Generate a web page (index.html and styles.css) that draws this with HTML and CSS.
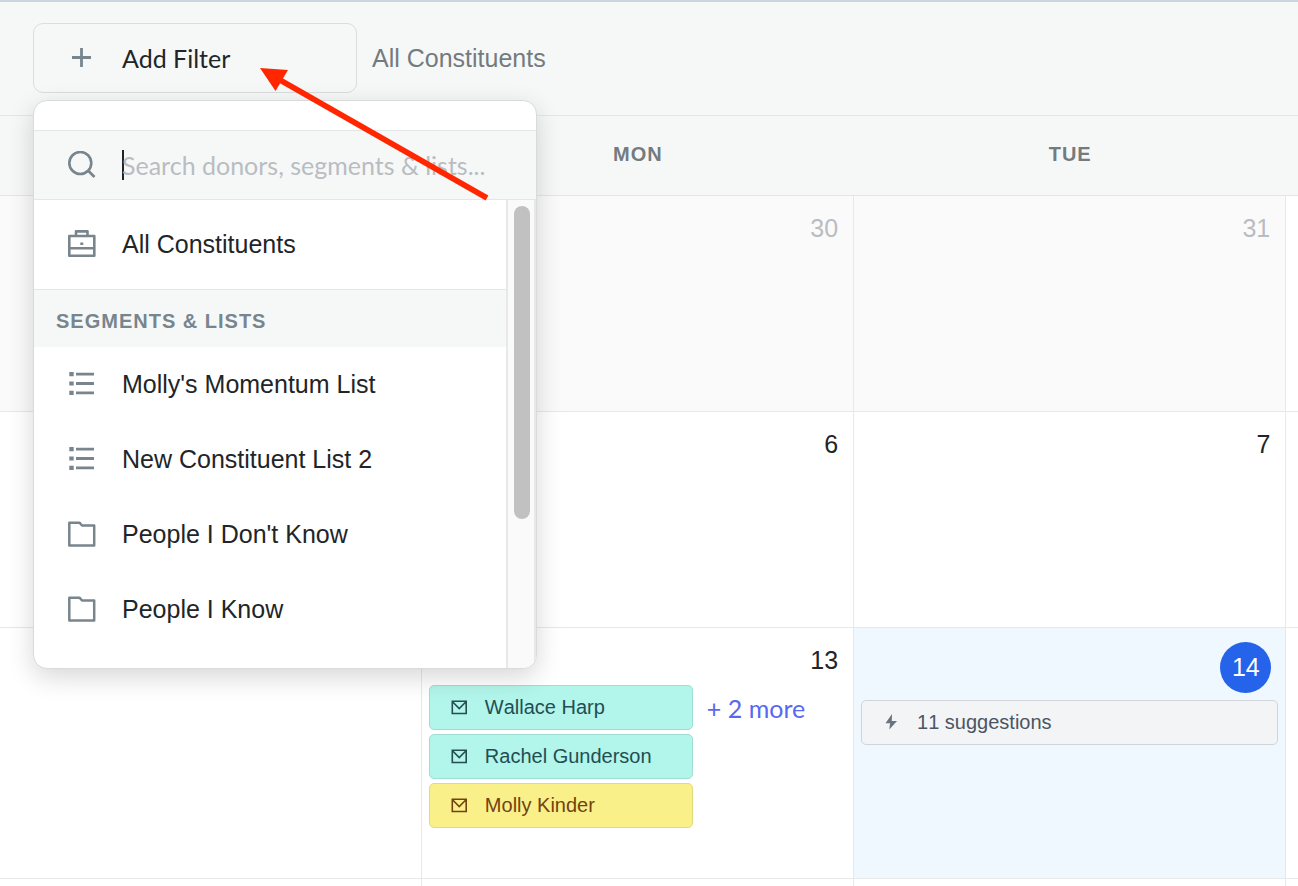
FILE: index.html
```html
<!DOCTYPE html>
<html lang="en">

<head>
    <meta charset="utf-8">
    <title>Calendar</title>
    <meta name="viewport" content="width=device-width, initial-scale=1.0">
    <link rel="stylesheet" href="styles.css">
</head>

<body>
    <!-- Shared icons -->
    <svg class="sprite" aria-hidden="true">
        <symbol id="icon-list" viewBox="0 0 28 28">
            <path d="M1.300 2h4.400v4.200H1.300zM1.300 11.400h4.400v4.200H1.300zM1.300 20.800h4.400v4.200H1.300zM8 2.700h18v2.800H8zM8 12.100h18v2.800H8zM8 21.500h18v2.800H8z" fill="currentColor"/>
        </symbol>
        <symbol id="icon-folder" viewBox="0 0 28 28">
            <path d="M1.300 2.700h10.200l2.500 2.800h12.200v20H1.300z" fill="none" stroke="currentColor" stroke-width="2.500" stroke-linejoin="round"/>
        </symbol>
        <symbol id="icon-mail" viewBox="0 0 16 16">
            <path d="M1.300 1.300h13.900v12.200H1.300zM2 2.200l6.250 6.300L14.500 2.200" fill="none" stroke="currentColor" stroke-width="1.600"/>
        </symbol>
    </svg>

    <header class="toolbar">
        <div class="filter">
            <button type="button" class="filter-button" aria-expanded="true">
                <svg class="icon" viewBox="0 0 28 28"><path d="M13.500 4v19M4 13.500h19" stroke="currentColor" stroke-width="2.800"/></svg>
                <span>Add Filter</span>
            </button>

            <div class="menu">
                <label class="search">
                    <svg class="icon" viewBox="0 1 28 28"><g fill="none" stroke="currentColor" stroke-width="2.600"><circle cx="12.300" cy="13" r="11"/><path d="M20 20.500l6.500 6.500"/></g></svg>
                    <input type="text" class="search-input" aria-label="Search" placeholder="Search donors, segments &amp; lists...">
                </label>
                <div class="menu-body">
                    <div class="menu-list">
                        <a href="#" class="menu-item menu-item-all">
                            <svg class="icon" viewBox="0 0 28 28"><g fill="none" stroke="currentColor" stroke-width="2.600" stroke-linejoin="round"><path d="M1.300 6h25v19.700h-25zM1.300 18.300h25M8 6V1.400h11.500V6"/></g><path d="M12.300 12.500h3v2.500h-3z" fill="currentColor"/></svg>
                            <span>All Constituents</span>
                        </a>
                        <h2 class="menu-title">SEGMENTS &amp; LISTS</h2>
                        <a href="#" class="menu-item"><svg class="icon"><use href="#icon-list"/></svg><span>Molly's Momentum List</span></a>
                        <a href="#" class="menu-item"><svg class="icon"><use href="#icon-list"/></svg><span>New Constituent List 2</span></a>
                        <a href="#" class="menu-item"><svg class="icon"><use href="#icon-folder"/></svg><span>People I Don't Know</span></a>
                        <a href="#" class="menu-item"><svg class="icon"><use href="#icon-folder"/></svg><span>People I Know</span></a>
                    </div>
                    <div class="scrollbar"><div class="scrollbar-thumb"></div></div>
                </div>
            </div>

            <!-- Arrow pointing at the filter button -->
            <svg class="arrow" viewBox="0 0 230 134" width="230" height="134" aria-hidden="true">
                <path d="M20 12L227 130" stroke="#ff2600" stroke-width="5.500"/>
                <path d="M0 0L28 2L15.500 23z" fill="#ff2600"/>
            </svg>
        </div>
        <span class="current-filter">All Constituents</span>
    </header>

    <table class="calendar">
        <colgroup>
            <col class="col-first">
            <col class="col-day">
            <col class="col-day">
            <col>
        </colgroup>
        <thead>
            <tr>
                <th></th>
                <th>MON</th>
                <th>TUE</th>
                <th></th>
            </tr>
        </thead>
        <tbody>
            <tr class="week">
                <td class="other-month"></td>
                <td class="other-month"><div class="date">30</div></td>
                <td class="other-month"><div class="date">31</div></td>
                <td></td>
            </tr>
            <tr class="week">
                <td></td>
                <td><div class="date">6</div></td>
                <td><div class="date">7</div></td>
                <td></td>
            </tr>
            <tr class="week week-tall">
                <td></td>
                <td>
                    <div class="date">13</div>
                    <div class="events">
                        <div class="event-list">
                            <button type="button" class="event event-teal"><svg class="event-icon"><use href="#icon-mail"/></svg>Wallace Harp</button>
                            <button type="button" class="event event-teal"><svg class="event-icon"><use href="#icon-mail"/></svg>Rachel Gunderson</button>
                            <button type="button" class="event event-yellow"><svg class="event-icon"><use href="#icon-mail"/></svg>Molly Kinder</button>
                        </div>
                        <a href="#" class="more">+ 2 more</a>
                    </div>
                </td>
                <td class="today">
                    <div class="date"><span class="today-number">14</span></div>
                    <div class="events">
                        <button type="button" class="event event-gray"><svg class="event-icon" viewBox="0 0 16 16"><path d="M9 -1L2.500 8.200h4.600L6.300 14.500 14 6H8.800z" fill="#6b7280"/></svg>11 suggestions</button>
                    </div>
                </td>
                <td></td>
            </tr>
            <tr class="week week-last">
                <td></td>
                <td></td>
                <td></td>
                <td></td>
            </tr>
        </tbody>
    </table>
</body>

</html>
```
FILE: styles.css
```css
* {
    box-sizing: border-box;
}

body {
    margin: 0;
    background-color: #ffffff;
    color: #212529;
    font-family: "Liberation Sans", Arial, sans-serif;
    font-size: 25px;
    line-height: 30px;
}

a {
    color: inherit;
    text-decoration: none;
}

button {
    font-family: inherit;
    cursor: pointer;
}

.sprite {
    display: none;
}

.icon {
    width: 28px;
    height: 28px;
    flex-shrink: 0;
    color: #78858d;
}

/* Toolbar */
.toolbar {
    display: flex;
    align-items: center;
    gap: 15px;
    height: 116px;
    padding: 0 33px 2px;
    background-color: #f6f8f8;
    border-top: 2px solid #cbd5e0;
    border-bottom: 1px solid #e4e7e7;
}

.filter {
    position: relative;
}

.filter-button {
    display: flex;
    align-items: center;
    gap: 26px;
    width: 324px;
    height: 70px;
    padding: 0 34px;
    background-color: transparent;
    border: 1px solid #d9dddd;
    border-radius: 10px;
    color: #212529;
    font-family: Lato, sans-serif;
    font-size: 25px;
}

.current-filter {
    color: #747b7e;
}

/* Dropdown */
.menu {
    position: absolute;
    top: 77px;
    left: 0;
    z-index: 2;
    width: 504px;
    padding-top: 29px;
    overflow: hidden;
    background-color: #ffffff;
    border: 1px solid #d9dbdb;
    border-radius: 14px;
    box-shadow: 0 8px 26px rgba(0, 0, 0, 0.16);
}

.search {
    display: flex;
    align-items: center;
    gap: 26px;
    height: 70px;
    padding: 0 34px;
    background-color: #f6f8f8;
    border-top: 1px solid #e4e7e7;
    border-bottom: 1px solid #e4e7e7;
}

.search-input {
    flex: 1;
    min-width: 0;
    height: 30px;
    padding: 0;
    border: none;
    outline: none;
    /* text cursor */
    background: linear-gradient(#212529, #212529) left / 2px 30px no-repeat;
    font-family: Lato, sans-serif;
    font-size: 25px;
}

.search-input::placeholder {
    color: #b9bdc1;
}

.menu-body {
    display: flex;
}

.menu-list {
    flex: 1;
    padding-bottom: 21px;
}

.menu-item {
    display: flex;
    align-items: center;
    gap: 26px;
    height: 75px;
    padding: 0 34px;
}

.menu-item-all {
    height: 90px;
    border-bottom: 1px solid #e4e7e7;
}

.menu-title {
    margin: 0;
    padding: 16px 22px 11px;
    background-color: #f6f8f8;
    color: #78858d;
    font-size: 20px;
    letter-spacing: 1px;
}

.scrollbar {
    width: 30px;
    padding: 6px;
    background-color: #fafafa;
    border-left: 2px solid #e8e8e8;
    border-right: 2px solid #e8e8e8;
}

.scrollbar-thumb {
    width: 16px;
    height: 313px;
    background-color: #c1c1c1;
    border-radius: 8px;
}

.arrow {
    position: absolute;
    top: 45px;
    left: 227px;
    z-index: 3;
    pointer-events: none;
}

/* Calendar */
.calendar {
    width: 100%;
    table-layout: fixed;
    border-collapse: separate;
    border-spacing: 0;
}

.col-first {
    width: 32.5%;
}

.col-day {
    width: 33.3%;
}

th {
    height: 80px;
    padding: 0 0 3px;
    background-color: #f6f8f8;
    border-bottom: 1px solid #e4e7e7;
    color: #747b7e;
    font-size: 20px;
    letter-spacing: 1px;
}

td {
    height: 216px;
    padding: 0;
    vertical-align: top;
    border-right: 1px solid #e7e8ea;
    border-bottom: 1px solid #e7e8ea;
}

td:last-child {
    border-right: none;
}

.week-tall td {
    height: 251px;
}

.week-last td {
    height: 7px;
    border-bottom: none;
}

.other-month {
    background-color: #fafafa;
    color: #b9bdc1;
}

.today {
    background-color: #eff7ff;
}

.date {
    padding: 17px 15px 10px;
    text-align: right;
}

.today .date {
    display: flex;
    justify-content: flex-end;
    padding: 14px 14px 7px;
}

.today-number {
    width: 51px;
    height: 51px;
    background-color: #2563eb;
    border-radius: 50%;
    color: #ffffff;
    line-height: 50px;
    text-align: center;
}

.events {
    display: flex;
    align-items: flex-start;
    gap: 14px;
    padding: 0 7px;
}

.event-list {
    display: flex;
    flex-direction: column;
    gap: 4px;
    width: 264px;
}

.event {
    display: flex;
    align-items: center;
    gap: 18px;
    width: 100%;
    height: 45px;
    padding: 0 21px;
    border: 1px solid;
    border-radius: 5px;
    font-size: 20px;
    font-kerning: none;
}

.event-icon {
    width: 16px;
    height: 16px;
    flex-shrink: 0;
    overflow: visible;
}

.event-teal {
    background-color: #b2f5ea;
    border-color: #a0ddd4;
    color: #234e52;
}

.event-yellow {
    background-color: #faf089;
    border-color: #e4d97c;
    color: #744210;
}

.event-gray {
    background-color: #f3f4f6;
    border-color: #d1d5db;
    color: #4b5563;
}

.more {
    padding-top: 8px;
    color: #5a67f2;
    font-family: Lato, sans-serif;
    font-size: 25px;
}
```
